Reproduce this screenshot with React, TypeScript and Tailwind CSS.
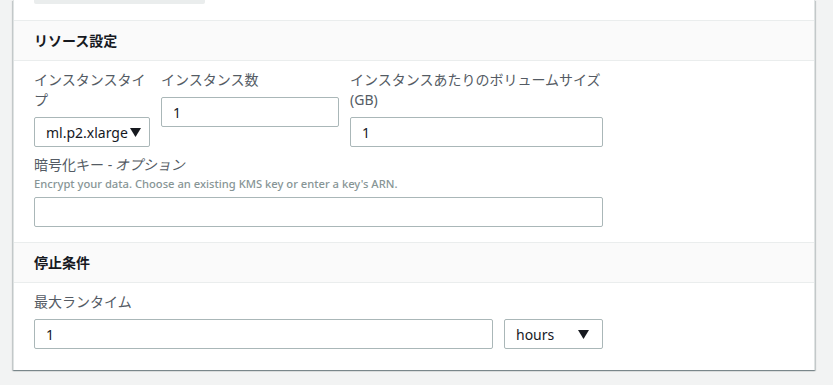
import React from 'react'

const font = 'font-["Noto_Sans","Noto_Sans_CJK_JP",sans-serif]'

function Label({ children, className = '' }: { children: React.ReactNode; className?: string }) {
  return <div className={`text-[14px] leading-[20px] text-[#545b64] mb-[7px] ${className}`}>{children}</div>
}

function TextInput({ value = '', className = '' }: { value?: string; className?: string }) {
  return (
    <div
      className={`h-[30px] border border-[#aab7b8] rounded-[2px] bg-white flex items-center pl-[11px] text-[14px] text-[#16191f] ${className}`}
    >
      {value}
    </div>
  )
}

function Caret() {
  return (
    <svg width="11" height="9" viewBox="0 0 11 9" className="shrink-0">
      <path d="M0 0h11L5.5 9z" fill="#16191f" />
    </svg>
  )
}

function SectionHeader({ title }: { title: string }) {
  return (
    <div className="h-[41px] bg-[#fafafa] border-y border-[#eaeded] flex items-center px-[20px]">
      <span className="text-[14px] font-bold text-[#16191f]">{title}</span>
    </div>
  )
}

export default function App() {
  return (
    <div className={`min-h-[385px] bg-[#f2f3f3] pl-[13px] ${font}`}>
      <div className="w-[802px] bg-white border-x border-[#dfe3e3] shadow-[0_1px_1px_0_rgba(0,28,36,0.3),1px_1px_1px_0_rgba(0,28,36,0.15),-1px_1px_1px_0_rgba(0,28,36,0.15)]">
        {/* tail of previous section */}
        <div className="h-[20px] px-[20px]">
          <div className="w-[171px] h-[4px] bg-[#eaeded] rounded-b-[2px]" />
        </div>

        <SectionHeader title="リソース設定" />
        <div className="px-[20px] pt-[9px] pb-[15px]">
          <div className="flex gap-[11px] items-start">
            <div className="w-[116px]">
              <Label>インスタンスタイプ</Label>
              <div className="h-[30px] border border-[#aab7b8] rounded-[2px] flex items-center pl-[11px] pr-[11px] gap-[2px] text-[14px] text-[#16191f]">
                <span>ml.p2.xlarge</span>
                <Caret />
              </div>
            </div>
            <div className="w-[178px]">
              <Label>インスタンス数</Label>
              <TextInput value="1" />
            </div>
            <div className="w-[253px]">
              <Label>インスタンスあたりのボリュームサイズ (GB)</Label>
              <TextInput value="1" />
            </div>
          </div>

          <div className="mt-[8px] w-[569px]">
            <div className="text-[14px] leading-[20px] text-[#545b64]">
              暗号化キー - <span className="inline-block -skew-x-12">オプション</span>
            </div>
            <div className="text-[11.2px] leading-[16px] font-medium text-[#879596] mt-[1px] mb-[5px]">
              Encrypt your data. Choose an existing KMS key or enter a key's ARN.
            </div>
            <TextInput />
          </div>
        </div>

        <SectionHeader title="停止条件" />
        <div className="px-[20px] pt-[9px] pb-[21px]">
          <Label className="mb-[6px]">最大ランタイム</Label>
          <div className="flex gap-[11px]">
            <TextInput value="1" className="w-[459px]" />
            <div className="w-[99px] h-[30px] border border-[#aab7b8] rounded-[2px] flex items-center justify-between pl-[11px] pr-[13px] text-[14px] text-[#16191f]">
              <span>hours</span>
              <Caret />
            </div>
          </div>
        </div>
      </div>
    </div>
  )
}
